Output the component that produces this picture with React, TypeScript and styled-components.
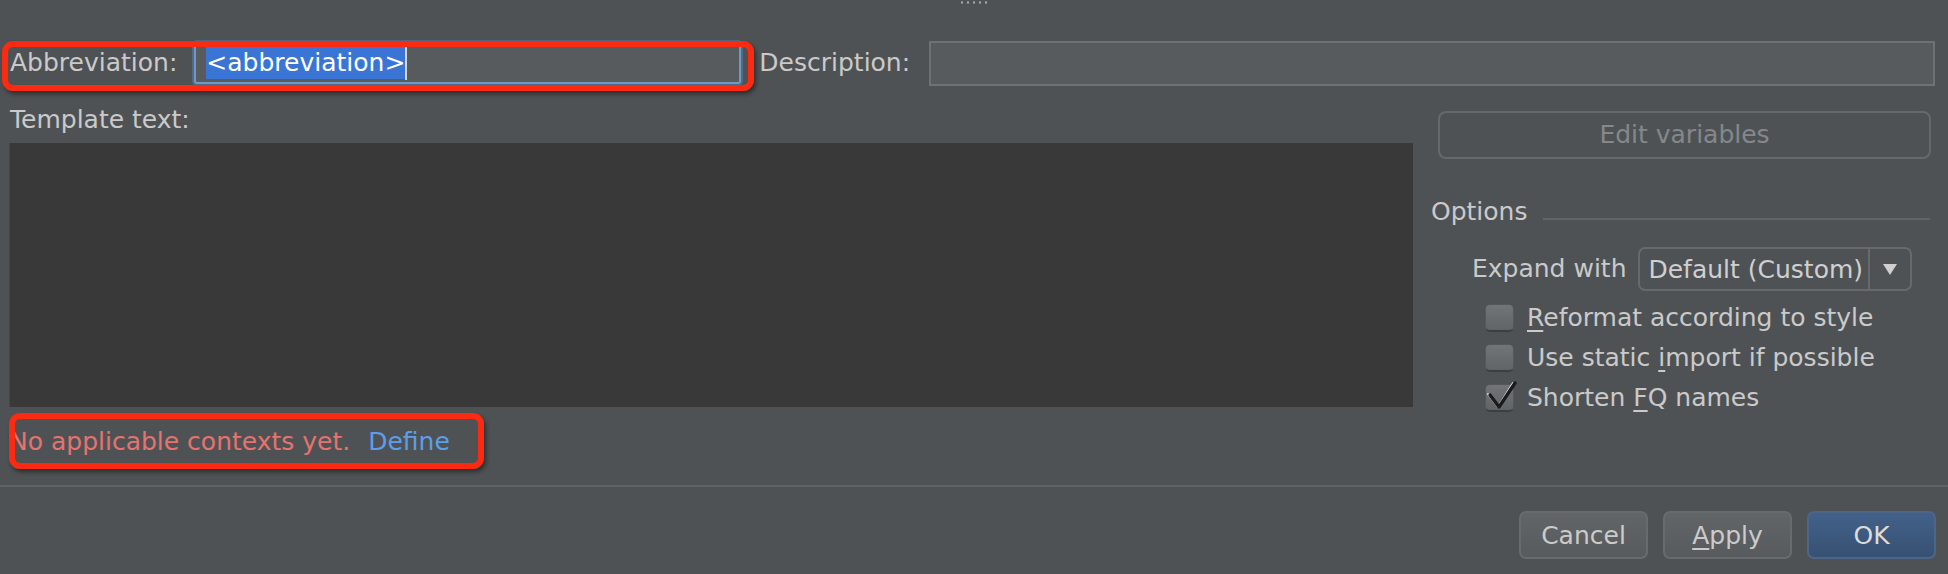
import React from "react";
import styled, { createGlobalStyle, css } from "styled-components";

const GlobalStyle = createGlobalStyle`
  html, body {
    margin: 0;
    padding: 0;
    background: #4f5255;
  }
  body {
    font-family: "DejaVu Sans", "Liberation Sans", sans-serif;
  }
`;

const Dialog = styled.div`
  width: 1948px;
  height: 574px;
  background: #4f5255;
  display: flex;
  flex-direction: column;
  overflow: hidden;
  font-family: "DejaVu Sans", "Liberation Sans", sans-serif;
  font-size: 25px;
  color: #c8c8c8;
`;

const Grip = styled.div`
  align-self: center;
  margin-top: 1px;
  width: 30px;
  height: 3px;
  background-image: radial-gradient(circle, #a4a7aa 1px, transparent 1.3px);
  background-size: 6px 3px;
`;

const TopRow = styled.div`
  margin-top: 36px;
  height: 46px;
  display: flex;
  align-items: center;
  padding: 0 13px 0 10px;
`;

const highlight = css`
  &::after {
    content: "";
    position: absolute;
    border: 6px solid #fb2a10;
    border-radius: 11px;
    box-shadow: 2px 3px 4px rgba(0, 0, 0, 0.45);
    pointer-events: none;
  }
`;

const AbbrGroup = styled.div`
  position: relative;
  display: flex;
  align-items: center;
  gap: 17px;
  ${highlight}
  &::after {
    top: -1px;
    left: -8px;
    right: -13px;
    bottom: -7px;
  }
`;

const Label = styled.span<{ $dim?: boolean }>`
  font-size: 25px;
  line-height: 30px;
  white-space: nowrap;
  color: ${(p) => (p.$dim ? "#85888b" : "#cacaca")};
`;

const AbbrInput = styled.div`
  box-sizing: border-box;
  width: 547px;
  height: 42px;
  border: 2px solid #6f99c4;
  border-radius: 3px;
  box-shadow: 0 0 0 2px rgba(86, 126, 170, 0.55);
  background: #585b5d;
  display: flex;
  align-items: center;
  padding-left: 10px;
`;

const Selected = styled.span`
  background: #3a75d6;
  color: #ffffff;
  font-size: 25px;
  line-height: 32px;
  height: 32px;
  white-space: nowrap;
`;

const Caret = styled.span`
  width: 2px;
  height: 34px;
  background: #d6d6d6;
`;

const DescLabel = styled(Label)`
  margin-left: 18px;
`;

const DescField = styled.div`
  box-sizing: border-box;
  flex: 1;
  height: 45px;
  margin-left: 19px;
  border: 2px solid #6f7274;
  background: #585b5d;
`;

const MainGrid = styled.div`
  margin-top: 15px;
  height: 306px;
  display: grid;
  grid-template-columns: 1404px 1fr;
  column-gap: 18px;
  align-items: start;
  padding: 0 12px 0 9px;
`;

const Column = styled.div`
  display: flex;
  flex-direction: column;
`;

const TemplateLabel = styled(Label)`
  padding-left: 1px;
  margin-top: 4px;
`;

const TemplateArea = styled.div`
  margin-top: 8px;
  height: 264px;
  background: #393939;
  border-left: 1px solid #444748;
`;

const EditButton = styled.div`
  box-sizing: border-box;
  margin: 10px 5px 0 7px;
  height: 48px;
  border: 2px solid #66696c;
  border-radius: 8px;
  display: flex;
  align-items: center;
  justify-content: center;
`;

const OptionsHeader = styled.div`
  margin-top: 38px;
  display: flex;
  align-items: flex-end;
`;

const HeaderLine = styled.div`
  flex: 1;
  height: 2px;
  margin: 0 6px 7px 16px;
  background: #626568;
`;

const ExpandRow = styled.div`
  margin-top: 20px;
  height: 44px;
  display: flex;
  align-items: center;
  gap: 12px;
  padding-left: 41px;
`;

const Combo = styled.div`
  box-sizing: border-box;
  width: 274px;
  height: 44px;
  border: 2px solid #67696c;
  border-radius: 7px;
  display: flex;
  align-items: stretch;
`;

const ComboValue = styled.div`
  flex: 1;
  display: flex;
  align-items: center;
  padding-left: 8px;
  color: #d0d0d0;
  white-space: nowrap;
`;

const ComboArrow = styled.div`
  width: 40px;
  border-left: 2px solid #67696c;
  display: flex;
  align-items: center;
  justify-content: center;
  &::before {
    content: "";
    border-left: 7px solid transparent;
    border-right: 7px solid transparent;
    border-top: 11px solid #cfcfcf;
  }
`;

const CheckList = styled.div`
  margin-top: 12px;
  display: flex;
  flex-direction: column;
  gap: 10px;
  padding-left: 54px;
`;

const CheckRow = styled.div`
  height: 30px;
  display: flex;
  align-items: center;
  gap: 13px;
`;

const Box = styled.div`
  position: relative;
  box-sizing: border-box;
  width: 29px;
  height: 28px;
  border-radius: 5px;
  background: linear-gradient(#727577, #616466);
  border: 1px solid #55585a;
  border-bottom: 2px solid #3c3f41;
`;

const CheckSvg = styled.svg`
  position: absolute;
  left: -1px;
  top: -5px;
  overflow: visible;
`;

const Mnemonic = styled.span`
  text-decoration: underline;
  text-underline-offset: 4px;
  text-decoration-thickness: 2px;
`;

const ContextRow = styled.div`
  margin-top: 20px;
  padding-left: 9px;
  display: flex;
`;

const ContextGroup = styled.div`
  position: relative;
  display: flex;
  gap: 18px;
  ${highlight}
  &::after {
    top: -14px;
    bottom: -12px;
    left: 0;
    right: -34px;
  }
`;

const ErrorText = styled.span`
  line-height: 30px;
  color: #e5736f;
  white-space: nowrap;
`;

const LinkText = styled.span`
  line-height: 30px;
  color: #5c9fe8;
`;

const Separator = styled.div`
  margin-top: 28px;
  height: 2px;
  background: #606366;
`;

const ButtonBar = styled.div`
  display: flex;
  justify-content: flex-end;
  gap: 15px;
  padding: 24px 12px 0 0;
`;

const DialogButton = styled.div<{ $primary?: boolean }>`
  box-sizing: border-box;
  width: 129px;
  height: 48px;
  border-radius: 7px;
  display: flex;
  align-items: center;
  justify-content: center;
  border: 2px solid ${(p) => (p.$primary ? "#4b6688" : "#686b6d")};
  background: ${(p) =>
    p.$primary
      ? "linear-gradient(#42618a, #385172)"
      : "linear-gradient(#616567, #585b5d)"};
  color: ${(p) => (p.$primary ? "#dcdcdc" : "#cbcbcb")};
`;

const Check = () => (
  <CheckSvg width="32" height="32" viewBox="0 0 32 32">
    <path d="M3 14 L13 27 L28 3" fill="none" stroke="#e8e8e8" strokeWidth="2" strokeLinecap="round" strokeLinejoin="round" />
    <path d="M5 15 L14 27 L30 3" fill="none" stroke="#1b1b1b" strokeWidth="3.4" strokeLinecap="round" strokeLinejoin="round" />
  </CheckSvg>
);

const options = [
  { pre: "", key: "R", post: "eformat according to style", checked: false },
  { pre: "Use static ", key: "i", post: "mport if possible", checked: false },
  { pre: "Shorten ", key: "F", post: "Q names", checked: true },
];

export default function App() {
  return (
    <>
      <GlobalStyle />
      <Dialog>
        <Grip />
        <TopRow>
          <AbbrGroup>
            <Label>Abbreviation:</Label>
            <AbbrInput>
              <Selected>&lt;abbreviation&gt;</Selected>
              <Caret />
            </AbbrInput>
          </AbbrGroup>
          <DescLabel>Description:</DescLabel>
          <DescField />
        </TopRow>
        <MainGrid>
          <Column>
            <TemplateLabel>Template text:</TemplateLabel>
            <TemplateArea />
          </Column>
          <Column>
            <EditButton>
              <Label $dim>Edit variables</Label>
            </EditButton>
            <OptionsHeader>
              <Label>Options</Label>
              <HeaderLine />
            </OptionsHeader>
            <ExpandRow>
              <Label>Expand with</Label>
              <Combo>
                <ComboValue>Default (Custom)</ComboValue>
                <ComboArrow />
              </Combo>
            </ExpandRow>
            <CheckList>
              {options.map((o) => (
                <CheckRow key={o.post}>
                  <Box>{o.checked && <Check />}</Box>
                  <Label>
                    {o.pre}
                    <Mnemonic>{o.key}</Mnemonic>
                    {o.post}
                  </Label>
                </CheckRow>
              ))}
            </CheckList>
          </Column>
        </MainGrid>
        <ContextRow>
          <ContextGroup>
            <ErrorText>No applicable contexts yet.</ErrorText>
            <LinkText>Define</LinkText>
          </ContextGroup>
        </ContextRow>
        <Separator />
        <ButtonBar>
          <DialogButton>Cancel</DialogButton>
          <DialogButton>
            <span>
              <Mnemonic>A</Mnemonic>pply
            </span>
          </DialogButton>
          <DialogButton $primary>OK</DialogButton>
        </ButtonBar>
      </Dialog>
    </>
  );
}
